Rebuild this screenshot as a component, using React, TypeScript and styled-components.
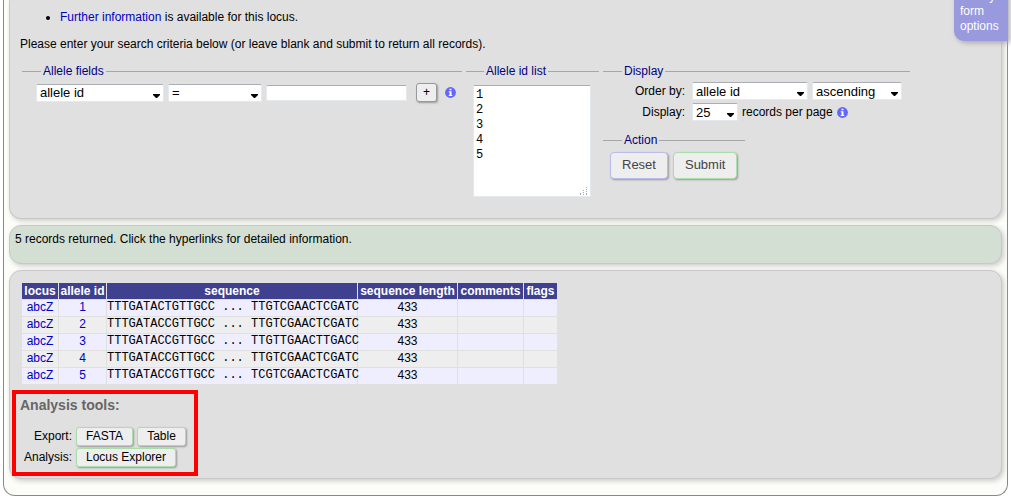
import React from "react";
import styled, { createGlobalStyle } from "styled-components";

const GlobalStyle = createGlobalStyle`
  * { box-sizing: border-box; }
  body {
    margin: 0;
    background: #fff;
    color: #000;
    font: 12px/15px "Liberation Sans", Arial, sans-serif;
  }
`;

const Frame = styled.div`
  position: relative;
  margin: 0 3px;
  padding: 0 5px 16px;
  border: 1px solid #888;
  border-top: 0;
  border-radius: 0 0 12px 12px;
  background: #fcfdf8;
`;

const Panel = styled.section<{ $tone?: "green"; $open?: boolean }>`
  border: 1px solid #c8c8c8;
  border-top-width: ${(p) => (p.$open ? "0" : "1px")};
  border-radius: ${(p) => (p.$open ? "0 0 12px 12px" : "12px")};
  background: ${(p) => (p.$tone === "green" ? "#d3dfd3" : "#e0e0e0")};
  box-shadow: 2px 2px 5px #ccc;
  margin-bottom: 6px;
  &:last-of-type { margin-bottom: 0; }
`;

const QueryPanel = styled(Panel)`
  padding: 10px 10px 21px;
`;

const MessagePanel = styled(Panel)`
  padding: 6px 5px 16px;
`;

const ResultsPanel = styled(Panel)`
  padding: 11px 2px 2px;
`;

const Tab = styled.aside`
  position: absolute;
  top: -16px;
  right: -1px;
  width: 54px;
  padding: 5px 6px 7px;
  border-radius: 0 0 0 10px;
  background: #9999dd;
  color: #fff;
  box-shadow: 2px 2px 5px #aaa;
`;

const Notes = styled.ul`
  margin: 0 0 12px;
  padding-left: 40px;
`;

const Text = styled.p`
  margin: 0;
`;

const Link = styled.a`
  color: #0000c0;
  text-decoration: none;
`;

const FormRow = styled.form`
  display: flex;
  align-items: flex-start;
  gap: 4px;
  margin: 12px 2px 0;
`;

const Stack = styled.div`
  display: flex;
  flex-direction: column;
  align-items: flex-start;
  gap: 12px;
`;

const Group = styled.fieldset`
  margin: 0;
  padding: 6px 8px 0 7px;
  border: 0;
  border-top: 1px solid #a6a6a6;
  min-width: 0;
`;

const FieldsGroup = styled(Group)`
  padding: 4px 6px 0 14px;
`;

const DisplayGroup = styled(Group)`
  padding: 3px 8px 0 16px;
`;

const ActionGroup = styled(Group)`
  padding-top: 4px;
`;

const Legend = styled.legend<{ $inset: number }>`
  margin-left: ${(p) => p.$inset}px;
  padding: 0 2px;
  color: #000080;
`;

const Row = styled.div<{ $gap?: number }>`
  display: flex;
  align-items: center;
  gap: ${(p) => p.$gap ?? 4}px;
`;

const Rows = styled.div`
  display: flex;
  flex-direction: column;
  gap: 3px;
`;

const SelectBox = styled.span<{ $width: number }>`
  position: relative;
  display: inline-block;
  width: ${(p) => p.$width}px;
  height: 18px;
  svg {
    position: absolute;
    right: 4px;
    bottom: 4px;
    pointer-events: none;
  }
`;

const field = `
  margin: 0;
  border: 1px solid #e3e9ef;
  border-top-color: #abadb3;
  border-radius: 2px;
  background: #fff;
  color: #000;
`;

const NativeSelect = styled.select`
  ${field}
  display: block;
  appearance: none;
  width: 100%;
  height: 18px;
  padding: 0 3px;
  font: 13px/15px "Liberation Sans", Arial, sans-serif;
`;

const ValueInput = styled.input`
  ${field}
  width: 141px;
  height: 16px;
  padding: 0 3px;
`;

const IdListBox = styled.div`
  position: relative;
  svg {
    position: absolute;
    right: 3px;
    bottom: 2px;
    pointer-events: none;
  }
`;

const IdList = styled.textarea`
  ${field}
  display: block;
  width: 118px;
  height: 112px;
  padding: 2px;
  resize: none;
  font: 12px/15px "Liberation Mono", monospace;
`;

const FormLabel = styled.label`
  width: 66px;
  margin-right: 3px;
  text-align: right;
`;

const Button = styled.button<{ $edge?: string }>`
  height: 19px;
  padding: 0 9px;
  border: 1px solid ${(p) => p.$edge ?? "#aaddaa"};
  border-radius: 3px;
  background: #eee;
  color: #000;
  font: 12px/15px "Liberation Sans", Arial, sans-serif;
  box-shadow: 1px 1px 2px #999;
`;

const AddButton = styled(Button)`
  width: 21px;
  padding: 0;
  margin: 0 4px 0 5px;
`;

const BigButton = styled(Button)`
  height: 27px;
  padding: 0 11px 2px;
  border-radius: 4px;
  color: #444;
  font-size: 13px;
`;

const DataTable = styled.table`
  width: 537px;
  margin-left: 9px;
  border-spacing: 1px;
  table-layout: fixed;
  text-align: center;
`;

const Th = styled.th<{ $width: number }>`
  width: ${(p) => p.$width}px;
  height: 16px;
  padding: 0;
  background: #404090;
  color: #fff;
  line-height: 16px;
  white-space: nowrap;
`;

const Tr = styled.tr`
  background: #eee;
  &:nth-child(odd) { background: #eef; }
`;

const Td = styled.td<{ $mono?: boolean }>`
  height: 16px;
  padding: 0 0 2px;
  line-height: 14px;
  white-space: nowrap;
  font-family: ${(p) => (p.$mono ? '"Liberation Mono", monospace' : "inherit")};
`;

const Tools = styled.div`
  width: 186px;
  margin-top: 5px;
  padding: 3px 4px;
  border: 4px solid #f00;
`;

const ToolsTitle = styled.h2`
  margin: 0 0 13px;
  color: #666;
  font-size: 14px;
  line-height: 17px;
`;

const ToolRow = styled(Row)`
  margin-bottom: 2px;
`;

const ToolLabel = styled.span`
  width: 52px;
  text-align: right;
`;

const Select = ({ id, label, width, options }: { id: string; label?: string; width: number; options: string[] }) => (
  <SelectBox $width={width}>
    <NativeSelect id={id} aria-label={label}>
      {options.map((o) => (
        <option key={o}>{o}</option>
      ))}
    </NativeSelect>
    <svg width="7" height="4" viewBox="0 0 7 4" aria-hidden="true">
      <path d="M0 0h7v1L4 4H3L0 1z" fill="#000" />
    </svg>
  </SelectBox>
);

const InfoIcon = () => (
  <svg width="11" height="11" viewBox="0 0 11 11" role="img" aria-label="Help">
    <circle cx="5.5" cy="5.5" r="5.4" fill="#6464ff" />
    <path d="M4.5 1.7h2v1.5h-2zM3.7 4.2h2.8v3.7h.8v1.1H3.7V7.9h.8V5.3h-.8z" fill="#fff" />
  </svg>
);

const Grip = () => (
  <svg width="8" height="8" viewBox="0 0 8 8" aria-hidden="true" shapeRendering="crispEdges">
    <path
      d="M6 0h1v1h-1zM6 2h1v1h-1zM6 4h1v1h-1zM6 6h1v2h-1zM3 3h1v1h-1zM3 5h1v1h-1zM3 7h1v1h-1zM0 6h1v2h-1z"
      fill="#aaa"
    />
  </svg>
);

const columns: [string, number][] = [
  ["locus", 36],
  ["allele id", 47],
  ["sequence", 250],
  ["sequence length", 99],
  ["comments", 65],
  ["flags", 33],
];

const sequences = [
  "TTTGATACTGTTGCC ... TTGTCGAACTCGATC",
  "TTTGATACCGTTGCC ... TTGTCGAACTCGATC",
  "TTTGATACCGTTGCC ... TTGTTGAACTTGACC",
  "TTTGATACCGTTGCC ... TTGTCGAACTCGATC",
  "TTTGATACCGTTGCC ... TCGTCGAACTCGATC",
];

export default function App() {
  return (
    <>
      <GlobalStyle />
      <Frame>
        <QueryPanel $open>
          <Notes>
            <li>
              <Link href="#info">Further information</Link> is available for this locus.
            </li>
          </Notes>
          <Text>Please enter your search criteria below (or leave blank and submit to return all records).</Text>
          <FormRow onSubmit={(e) => e.preventDefault()}>
            <FieldsGroup>
              <Legend $inset={5}>Allele fields</Legend>
              <Row>
                <Select id="field" label="Field" width={128} options={["allele id"]} />
                <Select id="operator" label="Operator" width={94} options={["="]} />
                <ValueInput aria-label="Value" />
                <AddButton type="button" $edge="#999">+</AddButton>
                <InfoIcon />
              </Row>
            </FieldsGroup>
            <Group>
              <Legend $inset={11}>Allele id list</Legend>
              <IdListBox>
                <IdList aria-label="Allele id list" defaultValue={"1\n2\n3\n4\n5"} />
                <Grip />
              </IdListBox>
            </Group>
            <Stack>
              <DisplayGroup>
                <Legend $inset={3}>Display</Legend>
                <Rows>
                  <Row>
                    <FormLabel htmlFor="order">Order by:</FormLabel>
                    <Select id="order" width={116} options={["allele id"]} />
                    <Select id="direction" label="Direction" width={90} options={["ascending", "descending"]} />
                  </Row>
                  <Row>
                    <FormLabel htmlFor="count">Display:</FormLabel>
                    <Select id="count" width={46} options={["25"]} />
                    <span>records per page</span>
                    <InfoIcon />
                  </Row>
                </Rows>
              </DisplayGroup>
              <ActionGroup>
                <Legend $inset={12}>Action</Legend>
                <Row $gap={5}>
                  <BigButton type="reset" $edge="#bbbbee">Reset</BigButton>
                  <BigButton type="submit">Submit</BigButton>
                </Row>
              </ActionGroup>
            </Stack>
          </FormRow>
        </QueryPanel>
        <MessagePanel $tone="green">
          <Text>5 records returned. Click the hyperlinks for detailed information.</Text>
        </MessagePanel>
        <ResultsPanel>
          <DataTable>
            <thead>
              <tr>
                {columns.map(([name, width]) => (
                  <Th key={name} $width={width}>{name}</Th>
                ))}
              </tr>
            </thead>
            <tbody>
              {sequences.map((sequence, i) => (
                <Tr key={i}>
                  <Td><Link href="#abcZ">abcZ</Link></Td>
                  <Td><Link href={`#allele-${i + 1}`}>{i + 1}</Link></Td>
                  <Td $mono>{sequence}</Td>
                  <Td>433</Td>
                  <Td />
                  <Td />
                </Tr>
              ))}
            </tbody>
          </DataTable>
          <Tools>
            <ToolsTitle>Analysis tools:</ToolsTitle>
            <ToolRow>
              <ToolLabel>Export:</ToolLabel>
              <Button type="button">FASTA</Button>
              <Button type="button">Table</Button>
            </ToolRow>
            <ToolRow>
              <ToolLabel>Analysis:</ToolLabel>
              <Button type="button">Locus Explorer</Button>
            </ToolRow>
          </Tools>
        </ResultsPanel>
        <Tab>Modify form options</Tab>
      </Frame>
    </>
  );
}
